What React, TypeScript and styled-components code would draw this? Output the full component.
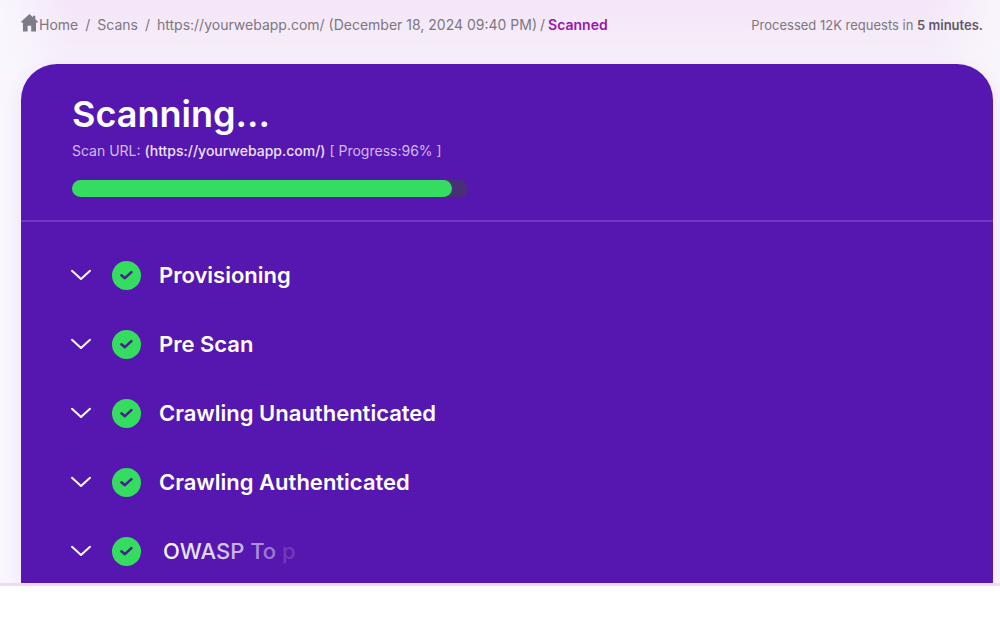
import React from "react";
import styled, { createGlobalStyle } from "styled-components";

const GlobalStyle = createGlobalStyle`
  *, *::before, *::after { box-sizing: border-box; }
  body {
    margin: 0;
    background: #ffffff;
    font-family: Inter, "Liberation Sans", sans-serif;
  }
`;

const Stage = styled.div`
  padding: 0 7px 0 21px;
  overflow: hidden;
  border-bottom: 3px solid #f2d8f6;
  background:
    linear-gradient(90deg, rgba(250, 248, 255, 0.9), rgba(250, 248, 255, 0) 7%, rgba(250, 248, 255, 0) 93%, rgba(250, 246, 253, 0.9)),
    linear-gradient(180deg, #f4e6f8 0, #f6eff9 64px, #f6f0fb 100%);
  background-origin: border-box;
`;

const TopBar = styled.header`
  display: flex;
  align-items: center;
  justify-content: space-between;
  height: 64px;
  padding: 0 10px 14px 0;
  color: #7c7681;
  font-size: 13px;
  line-height: 20px;
  white-space: nowrap;
`;

const Breadcrumb = styled.nav`
  display: flex;
  align-items: center;
  gap: 7px;
  font-size: 14px;
`;

const Trail = styled.span`
  display: flex;
  gap: 3px;
`;

const Crumb = styled.a`
  display: flex;
  align-items: center;
  gap: 1px;
  color: inherit;
  text-decoration: none;
`;

const Current = styled.span`
  color: #9c14ae;
  font-weight: 600;
`;

const HomeIcon = styled.svg`
  width: 17px;
  height: 18px;
  margin-bottom: 4px;
  fill: #7e7a86;
`;

const Summary = styled.p`
  margin: 0;

  strong {
    color: #5f5964;
    font-weight: 600;
  }
`;

const Card = styled.main`
  border-radius: 36px 36px 0 0;
  background: #5517af;
  box-shadow: 0 6px 20px rgba(85, 23, 175, 0.08);
  color: #ffffff;
`;

const CardHeader = styled.section`
  padding: 26px 51px 23px;
  border-bottom: 2px solid #7338c0;
`;

const Title = styled.h1`
  margin: 0;
  font-size: 36px;
  font-weight: 600;
  line-height: 48px;
`;

const ScanInfo = styled.p`
  margin: 3px 0 0;
  color: #d3b9f2;
  font-size: 14px;
  line-height: 20px;

  span {
    color: #eee0fc;
    font-weight: 500;
  }
`;

const Track = styled.div`
  width: 46%;
  max-width: 396px;
  height: 17px;
  margin-top: 19px;
  border-radius: 9px;
  background: #492e78;
`;

const Fill = styled.div`
  height: 100%;
  border-radius: inherit;
  background: #34dc60;
`;

const StageList = styled.ul`
  display: flex;
  flex-direction: column;
  gap: 39px;
  margin: 0;
  padding: 38px 50px 17px;
  list-style: none;
`;

const StageButton = styled.button`
  display: flex;
  align-items: center;
  width: 100%;
  height: 30px;
  padding: 0;
  border: 0;
  background: none;
  color: inherit;
  font: inherit;
  font-size: 22px;
  line-height: 30px;
  text-align: left;
  white-space: pre;
  cursor: pointer;
`;

const Chevron = styled.svg`
  width: 20px;
  height: 12px;
  margin-right: 21px;
  fill: none;
  stroke: #ffffff;
  stroke-width: 2;
  stroke-linecap: round;
  stroke-linejoin: round;
`;

const Check = styled.svg`
  width: 29px;
  height: 29px;
  margin-right: 18px;
`;

const Label = styled.span<{ $entering?: boolean }>`
  padding-left: ${({ $entering }) => ($entering ? "4px" : "0")};
  font-weight: ${({ $entering }) => ($entering ? 500 : 600)};
`;

const Letter = styled.span<{ $opacity: number }>`
  opacity: ${({ $opacity }) => $opacity};
`;

const progress = 96;

const stages = ["Provisioning", "Pre Scan", "Crawling Unauthenticated", "Crawling Authenticated"];

const enteringLetters: [string, number][] = [
  ["O", 0.95],
  ["W", 0.88],
  ["A", 0.82],
  ["S", 0.75],
  ["P", 0.68],
  [" ", 1],
  ["T", 0.52],
  ["o", 0.42],
  [" ", 1],
  ["p", 0.15],
];

function StageRow({ entering, children }: { entering?: boolean; children: React.ReactNode }) {
  return (
    <li>
      <StageButton type="button" aria-expanded={false}>
        <Chevron viewBox="0 0 20 12" aria-hidden="true">
          <path d="M1 1.8 10 10 19 1.8" />
        </Chevron>
        <Check viewBox="0 0 29 29" aria-hidden="true">
          <circle cx="14.5" cy="14.5" r="14.5" fill="#34dc60" />
          <path
            d="M9.4 14.2 12.9 17.2 19.4 11.2"
            fill="none"
            stroke="#45208f"
            strokeWidth="2.5"
            strokeLinecap="round"
            strokeLinejoin="round"
          />
        </Check>
        <Label $entering={entering}>{children}</Label>
      </StageButton>
    </li>
  );
}

export default function App() {
  return (
    <>
      <GlobalStyle />
      <Stage>
        <TopBar>
          <Breadcrumb aria-label="Breadcrumb">
            <Crumb href="#home">
              <HomeIcon viewBox="0 0 17 18" aria-hidden="true">
                <path d="M8.5 0 0 7.8 1 9 2 8.3V17.5H6.6V11.8H10.2V17.5H15V8.3L16 9 17 7.8 14.3 5.3V1.8H12V3.2Z" />
              </HomeIcon>
              Home
            </Crumb>
            <span>/</span>
            <Crumb href="#scans">Scans</Crumb>
            <span>/</span>
            <Trail>
              <Crumb href="#scan">https://yourwebapp.com/ (December 18, 2024 09:40 PM)</Crumb>
              <span>/</span>
              <Current aria-current="page">Scanned</Current>
            </Trail>
          </Breadcrumb>
          <Summary>
            Processed 12K requests in <strong>5 minutes.</strong>
          </Summary>
        </TopBar>
        <Card>
          <CardHeader>
            <Title>Scanning...</Title>
            <ScanInfo>
              Scan URL: <span>(https://yourwebapp.com/)</span> [ Progress:{progress}% ]
            </ScanInfo>
            <Track role="progressbar" aria-label="Scan progress" aria-valuenow={progress} aria-valuemin={0} aria-valuemax={100}>
              <Fill style={{ width: `${progress}%` }} />
            </Track>
          </CardHeader>
          <StageList>
            {stages.map((name) => (
              <StageRow key={name}>{name}</StageRow>
            ))}
            <StageRow entering>
              {enteringLetters.map(([char, opacity], index) => (
                <Letter key={index} $opacity={opacity}>
                  {char}
                </Letter>
              ))}
            </StageRow>
          </StageList>
        </Card>
      </Stage>
    </>
  );
}
